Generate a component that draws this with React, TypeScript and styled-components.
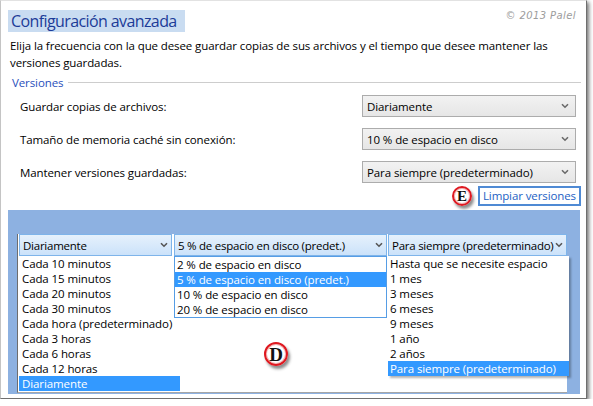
import styled, { createGlobalStyle } from "styled-components";

const GlobalStyle = createGlobalStyle`
  body {
    margin: 0;
    background: #fff;
    font-family: "Open Sans", "Noto Sans", sans-serif;
  }
`;

const frequencies = [
  "Cada 10 minutos",
  "Cada 15 minutos",
  "Cada 20 minutos",
  "Cada 30 minutos",
  "Cada hora (predeterminado)",
  "Cada 3 horas",
  "Cada 6 horas",
  "Cada 12 horas",
  "Diariamente",
];

const cacheSizes = [
  "2 % de espacio en disco",
  "5 % de espacio en disco (predet.)",
  "10 % de espacio en disco",
  "20 % de espacio en disco",
];

const keepOptions = [
  "Hasta que se necesite espacio",
  "1 mes",
  "3 meses",
  "6 meses",
  "9 meses",
  "1 año",
  "2 años",
  "Para siempre (predeterminado)",
];

const settings = [
  { label: "Guardar copias de archivos:", value: "Diariamente" },
  { label: "Tamaño de memoria caché sin conexión:", value: "10 % de espacio en disco" },
  { label: "Mantener versiones guardadas:", value: "Para siempre (predeterminado)" },
];

const dropdowns = [
  { value: "Diariamente", items: frequencies, width: 153, gap: 2, listWidth: 161, bordered: false, shadow: false, pad: 3 },
  { value: "5 % de espacio en disco (predet.)", items: cacheSizes, width: 213, gap: 1, listWidth: 213, bordered: true, shadow: false, pad: 2 },
  { value: "Para siempre (predeterminado)", items: keepOptions, width: 179, gap: 0, listWidth: 181, bordered: false, shadow: true, pad: 2 },
];

function Chevron({ color = "#6a6a6a" }: { color?: string }) {
  return (
    <svg width="8" height="6" viewBox="0 0 8 6">
      <path d="M1 1.2 L4 4.2 L7 1.2" fill="none" stroke={color} strokeWidth="1.6" />
    </svg>
  );
}

export default function App() {
  return (
    <>
      <GlobalStyle />
      <Window>
        <TitleRow>
          <Title>Configuración avanzada</Title>
          <Copyright>© 2013 Palel</Copyright>
        </TitleRow>
        <Description>
          Elija la frecuencia con la que desee guardar copias de sus archivos y el tiempo que desee mantener las
          <br />
          versiones guardadas.
        </Description>
        <GroupHeader>
          <span>Versiones</span>
          <GroupLine />
        </GroupHeader>
        <Rows>
          {settings.map((s) => (
            <Row key={s.label}>
              <span>{s.label}</span>
              <Combo>
                <span>{s.value}</span>
                <Chevron />
              </Combo>
            </Row>
          ))}
        </Rows>
        <ActionRow>
          <Badge $size={20} $font={15}>E</Badge>
          <Link>Limpiar versiones</Link>
        </ActionRow>
        <BluePanel>
          <Canvas>
            {dropdowns.map((d) => (
              <Column key={d.value} $width={d.width} $gap={d.gap}>
                <OpenCombo>
                  <ComboText>{d.value}</ComboText>
                  <Chevron color="#555" />
                </OpenCombo>
                <List $width={d.listWidth} $bordered={d.bordered} $shadow={d.shadow}>
                  {d.items.map((item) => (
                    <Item key={item} $pad={d.pad} $selected={item === d.value}>
                      {item}
                    </Item>
                  ))}
                </List>
              </Column>
            ))}
            <FloatingBadge>
              <Badge $size={24} $font={19}>D</Badge>
            </FloatingBadge>
          </Canvas>
        </BluePanel>
      </Window>
    </>
  );
}

const Window = styled.div`
  width: 587px;
  height: 399px;
  box-sizing: border-box;
  border-left: 1px solid #c4c4c4;
  border-top: 1px solid #e2e2e2;
  border-right: 1px solid #6f6f6f;
  border-bottom: 1px solid #6f6f6f;
  box-shadow: 2px 2px 4px rgba(0, 0, 0, 0.55);
  padding: 9px 5px 0 7px;
  display: flex;
  flex-direction: column;
  font-size: 11.5px;
  letter-spacing: -0.1px;
  color: #000;
`;

const TitleRow = styled.div`
  display: flex;
  justify-content: space-between;
  align-items: flex-start;
  height: 22px;
`;

const Title = styled.h1`
  margin: 0;
  background: #c9dcf1;
  color: #1c3b98;
  font-size: 16px;
  font-weight: 400;
  letter-spacing: -0.6px;
  line-height: 22px;
  padding: 0 8px 0 3px;
`;

const Copyright = styled.span`
  font-family: "DejaVu Sans", sans-serif;
  font-size: 10px;
  font-style: italic;
  color: #9c9c9c;
  letter-spacing: 0.4px;
  line-height: 12px;
  margin-top: 0;
  margin-right: 5px;
`;

const Description = styled.p`
  margin: 5px 0 0;
  padding-left: 2px;
  line-height: 17px;
  white-space: nowrap;
`;

const GroupHeader = styled.div`
  display: flex;
  align-items: center;
  height: 16px;
  margin-top: 3px;
  padding-left: 4px;
  color: #2a4fbc;
`;

const GroupLine = styled.div`
  flex: 1;
  height: 1px;
  background: #cdcdcd;
  margin-left: 5px;
`;

const Rows = styled.div`
  display: flex;
  flex-direction: column;
  gap: 11px;
  margin-top: 5px;
  padding: 0 5px 0 12px;
`;

const Row = styled.div`
  display: flex;
  justify-content: space-between;
  align-items: center;
  height: 22px;
`;

const Combo = styled.div`
  width: 214px;
  height: 22px;
  box-sizing: border-box;
  border: 1px solid #acacac;
  background: linear-gradient(#f2f2f2, #e6e6e6);
  display: flex;
  align-items: center;
  justify-content: space-between;
  padding: 0 6px 0 4px;
`;

const ActionRow = styled.div`
  display: flex;
  justify-content: flex-end;
  align-items: center;
  gap: 6px;
  height: 22px;
  margin-top: 2px;
`;

const Badge = styled.div<{ $size: number; $font: number }>`
  width: ${(p) => p.$size}px;
  height: ${(p) => p.$size}px;
  box-sizing: border-box;
  border-radius: 50%;
  border: 2px solid #de1820;
  background: radial-gradient(circle at 40% 35%, #ffffff 55%, #ececec 100%);
  box-shadow: inset 0 0 0 1px #f5b5b5, 2px 3px 3px rgba(0, 0, 0, 0.45);
  display: flex;
  align-items: center;
  justify-content: center;
  font-family: "Liberation Serif", serif;
  font-weight: 700;
  font-size: ${(p) => p.$font}px;
  letter-spacing: 0;
  line-height: 1;
  color: #111;
`;

const Link = styled.div`
  height: 20px;
  box-sizing: border-box;
  border: 2px solid #4f8ad4;
  padding: 0 3px;
  line-height: 16px;
  color: #1d62c4;
`;

const BluePanel = styled.div`
  margin-top: 3px;
  margin-right: 1px;
  height: 184px;
  box-sizing: border-box;
  background: #8db1e1;
  padding: 24px 13px 1px 9px;
`;

const Canvas = styled.div`
  position: relative;
  height: 159px;
  box-sizing: border-box;
  background: #fff;
  border-left: 1px solid #6d6d6d;
  border-bottom: 1px solid #a6a6a6;
  padding-left: 1px;
  display: flex;
  align-items: flex-start;
`;

const Column = styled.div<{ $width: number; $gap: number }>`
  position: relative;
  width: ${(p) => p.$width}px;
  margin-right: ${(p) => p.$gap}px;
  flex-shrink: 0;
`;

const OpenCombo = styled.div`
  height: 22px;
  box-sizing: border-box;
  border: 1px solid #7eb4ea;
  background: linear-gradient(#e6f1fc, #cbe2fa);
  display: flex;
  align-items: center;
  justify-content: space-between;
  gap: 1px;
  padding: 0 3px 0 3px;
  white-space: nowrap;
  letter-spacing: -0.25px;
`;

const ComboText = styled.span`
  min-width: 0;
`;

const List = styled.div<{ $width: number; $bordered: boolean; $shadow: boolean }>`
  position: absolute;
  top: 22px;
  left: 0;
  z-index: 1;
  width: ${(p) => p.$width}px;
  box-sizing: border-box;
  background: #fff;
  border: ${(p) => (p.$bordered ? "1px solid #569de5" : "none")};
  box-shadow: ${(p) => (p.$shadow ? "2px 2px 2px rgba(0, 0, 0, 0.3)" : "none")};
`;

const Item = styled.div<{ $pad: number; $selected: boolean }>`
  height: 15px;
  line-height: 15px;
  padding-left: ${(p) => p.$pad}px;
  white-space: nowrap;
  background: ${(p) => (p.$selected ? "#3399ff" : "transparent")};
  color: ${(p) => (p.$selected ? "#fff" : "#000")};
`;

const FloatingBadge = styled.div`
  position: absolute;
  left: 246px;
  top: 108px;
  z-index: 2;
`;
